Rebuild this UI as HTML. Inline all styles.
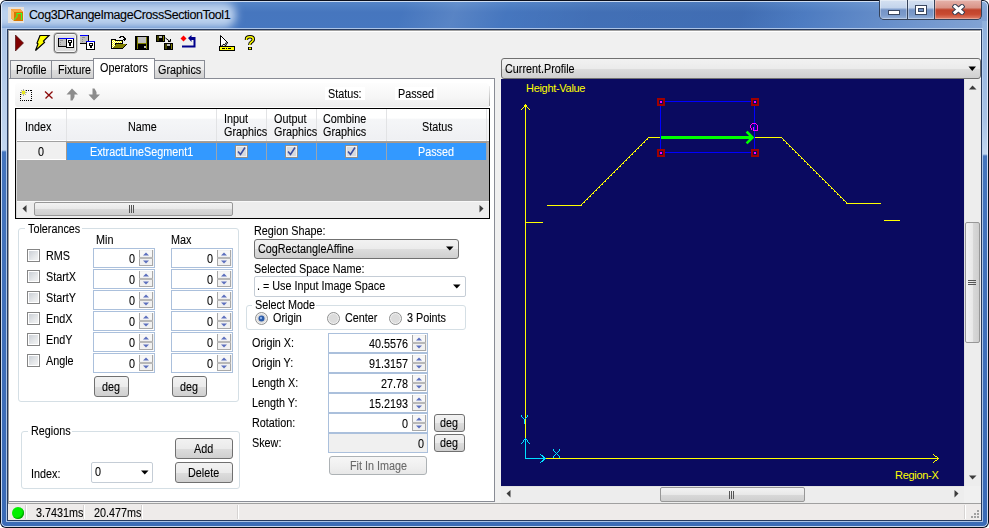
<!DOCTYPE html>
<html><head><meta charset="utf-8">
<style>
*{box-sizing:border-box;margin:0;padding:0}
html,body{width:989px;height:528px;overflow:hidden;background:#fff}
body{position:relative;font-family:"Liberation Sans",sans-serif;font-size:12px;color:#000}
.a{position:absolute}
.t{position:absolute;white-space:nowrap;line-height:14px;font-size:12px;transform:scaleX(.9);transform-origin:0 0;-webkit-text-stroke:0.1px currentColor}
.r{transform-origin:100% 0}
</style></head><body>
<!-- window frame -->
<div class="a" id="win" style="left:0;top:0;width:989px;height:528px;border-radius:6px 6px 6px 6px;overflow:hidden;background:#0a0f1c">
  <div class="a" style="left:1px;top:1px;width:987px;height:526px;border-radius:5px;overflow:hidden;background:#3c6cb6">
  <div class="a" style="left:0;top:0;width:987px;height:28px;background:linear-gradient(180deg,#5586c8 0,#4676be 40%,#4677c0 100%)"></div>
  <div class="a" style="left:0;top:0;width:987px;height:28px;background:linear-gradient(110deg,rgba(255,255,255,0) 0,rgba(255,255,255,0) 380px,rgba(255,255,255,.1) 430px,rgba(255,255,255,0) 480px,rgba(0,0,40,.06) 560px,rgba(0,0,40,.08) 700px,rgba(255,255,255,.04) 760px,rgba(255,255,255,.16) 830px,rgba(255,255,255,.28) 900px,rgba(255,255,255,.4) 989px)"></div>
  <div class="a" style="left:-20px;top:1px;width:255px;height:26px;background:#bcd2ee;border-radius:0 12px 12px 0;filter:blur(4px)"></div>
  <!-- side frames -->
  <div class="a" style="left:0;top:27px;width:6px;height:500px;background:linear-gradient(180deg,#abc4e6 0,#c2d6ef 122px,#4575bd 124px,#3a6ab6 500px)"></div>
  <div class="a" style="left:981px;top:20px;width:6px;height:500px;background:linear-gradient(180deg,#8fb0dc 0,#a9c3e6 100px,#c2d6ef 133px,#4575bd 135px,#3a6ab6 500px)"></div>
  </div>
  <!-- light inner edges -->
  <div class="a" style="left:1px;top:1px;width:987px;height:526px;border:1px solid rgba(235,242,252,.8);border-radius:5px"></div>
  <!-- frame inner light + dark lines around client -->
  <div class="a" style="left:6px;top:28px;width:977px;height:494px;border:1px solid rgba(190,210,238,.85)"></div>
  <div class="a" style="left:7px;top:29px;width:975px;height:492px;border:1px solid #263a5e"></div>
</div>
<!-- title -->
<div class="a" style="left:8px;top:7px;width:16px;height:16px;background:#e6e2dd"></div>
<svg class="a" style="left:8px;top:7px" width="16" height="16" viewBox="0 0 16 16">
 <path d="M3 2 H12 L15 5 V14 H6 L3 11 Z" fill="#d97500"/>
 <path d="M3 2 H12 L15 5 H6 Z" fill="#f9a640"/>
 <path d="M3 2 L6 5 V14 L3 11 Z" fill="#fbb458"/>
 <path d="M6 13 L9 9.5 V6.5 H13.5 V13" fill="none" stroke="#30ff30" stroke-width="1.1"/>
</svg>
<div class="t" style="left:29px;top:8px;font-size:12.5px;letter-spacing:-0.42px;line-height:15px;color:#000;transform:none">Cog3DRangeImageCrossSectionTool1</div>
<!-- window buttons -->
<div class="a" style="left:879px;top:0;width:103px;height:20px;border:1px solid #34425a;border-top:none;border-radius:0 0 5px 5px;overflow:hidden;background:#34425a">
  <div class="a" style="left:0;top:0;width:27px;height:19px;background:linear-gradient(180deg,#d5e1f1 0,#c3d4ec 40%,#7594c6 52%,#7c9bcb 80%,#97b3dc 100%);box-shadow:inset 0 0 0 1px rgba(255,255,255,.35)"></div>
  <div class="a" style="left:28px;top:0;width:26px;height:19px;background:linear-gradient(180deg,#d5e1f1 0,#c3d4ec 40%,#7594c6 52%,#7c9bcb 80%,#97b3dc 100%);box-shadow:inset 0 0 0 1px rgba(255,255,255,.35)"></div>
  <div class="a" style="left:55px;top:0;width:47px;height:19px;background:linear-gradient(180deg,#e6b3ab 0,#d99488 40%,#c0432c 52%,#c84a31 75%,#e0806a 100%);box-shadow:inset 0 0 0 1px rgba(255,255,255,.3)"></div>
</div>
<svg class="a" style="left:888px;top:10px" width="12" height="5"><rect x="0.5" y="0.5" width="11" height="4" fill="#fff" stroke="#3a4760"/></svg>
<svg class="a" style="left:915px;top:5px" width="12" height="10"><rect x="0.5" y="0.5" width="11" height="9" fill="#fff" stroke="#3a4760"/><rect x="3.5" y="3.5" width="5" height="3" fill="#6f8fc3" stroke="#3a4760"/></svg>
<svg class="a" style="left:952px;top:4px" width="13" height="11"><path d="M3 2.5 L10 8.5 M10 2.5 L3 8.5" fill="none" stroke="#3a3f52" stroke-width="5" stroke-linecap="square"/><path d="M3 2.5 L10 8.5 M10 2.5 L3 8.5" fill="none" stroke="#fff" stroke-width="3" stroke-linecap="square"/></svg>
<!-- client -->
<div class="a" id="client" style="left:8px;top:30px;width:973px;height:490px;border-top:1px solid #a0a0a0;border-left:1px solid #a0a0a0;border-bottom:1px solid #fff;border-right:1px solid #fff;background:#f0f0f0"></div>
<div class="a" style="left:9px;top:31px;width:971px;height:1px;background:#fff"></div>

<!-- toolbar -->
<div id="toolbar">
 <!-- run -->
 <svg class="a" style="left:14px;top:34px" width="12" height="18"><path d="M1.5 1 L9.5 9 L1.5 17 Z" fill="#800000" stroke="#3a0000" stroke-width="0.6"/></svg>
 <!-- lightning -->
 <svg class="a" style="left:34px;top:34px" width="17" height="18"><path d="M6 1.5 H15 L9.5 7 L10.5 8.5 L1.5 16.5 L4 10 L3 9 Z" fill="#ffff00" stroke="#000" stroke-width="1.2"/></svg>
 <!-- toggle button -->
 <div class="a" style="left:54px;top:33px;width:23px;height:20px;border:1px solid #6e6e6e;border-radius:3px;background:linear-gradient(180deg,#e4e4e4 0,#dadada 100%);box-shadow:inset 0 0 0 1px #f6f6f6,0 0 0 0.5px #9a9a9a"></div>
 <svg class="a" style="left:58px;top:37px" width="17" height="11" shape-rendering="crispEdges">
  <rect x="0" y="1" width="8" height="9" fill="#000"/>
  <rect x="1" y="1" width="7" height="8" fill="#c0c0c0"/>
  <rect x="1" y="1" width="7" height="1" fill="#0000ff"/>
  <rect x="2" y="3" width="3" height="1" fill="#909090"/><rect x="2" y="5" width="1" height="1" fill="#909090"/><rect x="2" y="7" width="1" height="1" fill="#909090"/>
  <rect x="8" y="1" width="8" height="10" fill="#000"/>
  <rect x="9" y="1" width="6" height="9" fill="#fff"/>
  <rect x="8" y="1" width="8" height="1" fill="#0000ff"/>
  <rect x="10" y="3" width="4" height="3" fill="#000"/><rect x="11" y="4" width="2" height="1" fill="#fff"/><rect x="11" y="6" width="2" height="3" fill="#000"/>
 </svg>
 <svg class="a" style="left:80px;top:35px" width="16" height="16" shape-rendering="crispEdges">
  <rect x="0" y="0" width="9" height="9" fill="#000"/>
  <rect x="0" y="1" width="8" height="7" fill="#c0c0c0"/>
  <rect x="0" y="0" width="8" height="1" fill="#0000ff"/>
  <rect x="2" y="2" width="3" height="1" fill="#909090"/><rect x="2" y="4" width="1" height="1" fill="#909090"/><rect x="2" y="6" width="1" height="1" fill="#909090"/>
  <rect x="6" y="6" width="9" height="9" fill="#000"/>
  <rect x="7" y="7" width="7" height="7" fill="#fff"/>
  <rect x="6" y="6" width="9" height="1" fill="#0000ff"/>
  <rect x="9" y="8" width="4" height="3" fill="#000"/><rect x="10" y="9" width="2" height="1" fill="#fff"/><rect x="10" y="11" width="2" height="2" fill="#000"/>
 </svg>
 <!-- open folder -->
 <svg class="a" style="left:110px;top:35px" width="18" height="15" shape-rendering="crispEdges">
  <defs><pattern id="dth" width="2" height="2" patternUnits="userSpaceOnUse"><rect width="2" height="2" fill="#ffff00"/><rect x="0" y="0" width="1" height="1" fill="#fff"/><rect x="1" y="1" width="1" height="1" fill="#fff"/></pattern></defs>
  <path d="M1 4 H5 L6 5 H13 V9 H17 L13 14 H1 Z" fill="#000"/>
  <rect x="2" y="5" width="3" height="8" fill="url(#dth)"/>
  <rect x="5" y="6" width="7" height="2" fill="url(#dth)"/>
  <path d="M3 13 L6 9 H16 L12.5 13 Z" fill="#808000"/>
  <path d="M9 2 H10 V1 H13 V2 H14 V3 H15 V4" fill="none" stroke="#000" stroke-width="1"/>
  <rect x="13" y="4" width="3" height="1" fill="#000"/><rect x="14" y="5" width="1" height="1" fill="#000"/>
 </svg>
 <!-- save -->
 <svg class="a" style="left:135px;top:36px" width="14" height="14">
  <rect x="0" y="0" width="14" height="14" fill="#000"/>
  <rect x="2" y="1" width="1" height="12" fill="#808000"/><rect x="11" y="1" width="1" height="12" fill="#808000"/>
  <rect x="3" y="1" width="8" height="6" fill="#c0c0c0"/>
  <rect x="2" y="7" width="10" height="1" fill="#808000"/>
  <rect x="9" y="10" width="2" height="2" fill="#c0c0c0"/>
 </svg>
 <!-- save as -->
 <svg class="a" style="left:156px;top:35px" width="17" height="15">
  <rect x="0" y="0" width="9" height="7" fill="#000"/><rect x="1.5" y="1" width="1" height="5" fill="#808000"/><rect x="7" y="1" width="1" height="5" fill="#808000"/><rect x="3" y="1" width="3" height="2" fill="#c0c0c0"/>
  <rect x="8" y="8" width="9" height="7" fill="#000"/><rect x="9.5" y="9" width="1" height="5" fill="#808000"/><rect x="15" y="9" width="1" height="5" fill="#808000"/><rect x="11" y="9" width="3" height="2" fill="#c0c0c0"/>
  <path d="M9.5 3 L14 6.5 M12 6.5 H14.5 V4" fill="none" stroke="#000" stroke-width="1"/>
 </svg>
 <!-- import -->
 <svg class="a" style="left:180px;top:35px" width="17" height="14">
  <path d="M3.5 0.5 L6.5 3.5 L3.5 6.5 L0.5 3.5 Z" fill="#ff0000"/>
  <path d="M8 3 L11.5 0 V2 H15.5 V12.5 H2 V10.5 H13.5 V5 H11.5 V7 Z" fill="#00008b"/>
 </svg>
 <!-- cursor ruler -->
 <svg class="a" style="left:219px;top:35px" width="16" height="16">
  <path d="M1.5 0.5 L9 8 L6.5 8 L7.5 10 L6 10.5 L5 9 L1.5 12 Z" fill="#fff" stroke="#000" stroke-width="1"/>
  <rect x="0" y="11" width="16" height="5" fill="#000"/>
  <rect x="1" y="12" width="14" height="3" fill="#ffff00"/>
  <path d="M3 13.5 H6 M7 13.5 H8 M9 13.5 H12" stroke="#000" stroke-width="1"/>
 </svg>
 <!-- help -->
 <svg class="a" style="left:244px;top:35px" width="12" height="16">
  <path d="M2.5 5 V4 Q2.5 1.8 6 1.8 Q9.3 1.8 9.3 4.3 Q9.3 6.2 7.2 7.2 Q5.8 8 5.8 10" fill="none" stroke="#000" stroke-width="3.4"/>
  <path d="M2.5 5 V4 Q2.5 1.8 6 1.8 Q9.3 1.8 9.3 4.3 Q9.3 6.2 7.2 7.2 Q5.8 8 5.8 10" fill="none" stroke="#ffff00" stroke-width="1.5"/>
  <rect x="4" y="12" width="4" height="3" fill="#000"/><rect x="5" y="12.6" width="2" height="1.6" fill="#ffff00"/>
 </svg>
</div>

<!-- tabs -->
<div id="tabs">
 <div class="a" style="left:10px;top:60px;width:42px;height:19px;border:1px solid #898c95;border-bottom:none;background:linear-gradient(180deg,#f2f2f2 0,#ebebeb 50%,#dddddd 51%,#cfcfcf 100%)"></div>
 <div class="t" style="left:16px;top:63px">Profile</div>
 <div class="a" style="left:51px;top:60px;width:43px;height:19px;border:1px solid #898c95;border-bottom:none;background:linear-gradient(180deg,#f2f2f2 0,#ebebeb 50%,#dddddd 51%,#cfcfcf 100%)"></div>
 <div class="t" style="left:58px;top:63px">Fixture</div>
 <div class="a" style="left:154px;top:60px;width:51px;height:19px;border:1px solid #898c95;border-bottom:none;background:linear-gradient(180deg,#f2f2f2 0,#ebebeb 50%,#dddddd 51%,#cfcfcf 100%)"></div>
 <div class="t" style="left:158px;top:63px">Graphics</div>
</div>

<!-- left panel -->
<div class="a" id="page" style="left:9px;top:78px;width:486px;height:424px;background:#fff;border:1px solid #898c95;border-left:none"></div>
<div class="a" style="left:93px;top:58px;width:62px;height:21px;border:1px solid #898c95;border-bottom:none;background:#fff"></div>
<div class="t" style="left:100px;top:61px">Operators</div>

<!-- inner toolbar -->
<div class="a" style="left:15px;top:83px;width:474px;height:24px;border-radius:3px 3px 0 3px;background:linear-gradient(180deg,#fdfdfd 0,#f6f6f6 60%,#eeeeee 100%)"></div>
<div class="a" style="left:489px;top:86px;width:1px;height:20px;background:linear-gradient(180deg,#f0f0f0 0,#a8a8a8 100%)"></div>
<svg class="a" style="left:19px;top:88px" width="14" height="14">
 <g fill="#000"><rect x="1" y="12" width="1" height="1"/><rect x="3" y="12" width="1" height="1"/><rect x="5" y="12" width="1" height="1"/><rect x="7" y="12" width="1" height="1"/><rect x="9" y="12" width="1" height="1"/><rect x="11" y="12" width="1" height="1"/><rect x="12" y="2" width="1" height="1"/><rect x="12" y="4" width="1" height="1"/><rect x="12" y="6" width="1" height="1"/><rect x="12" y="8" width="1" height="1"/><rect x="12" y="10" width="1" height="1"/><rect x="12" y="12" width="1" height="1"/><rect x="1" y="4" width="1" height="1"/><rect x="1" y="6" width="1" height="1"/><rect x="1" y="8" width="1" height="1"/><rect x="1" y="10" width="1" height="1"/><rect x="1" y="12" width="1" height="1"/><rect x="7" y="2" width="1" height="1"/><rect x="9" y="2" width="1" height="1"/><rect x="11" y="2" width="1" height="1"/></g>
 <path d="M2 2 L7 7 M7 2 L2 7 M4.5 1 V8 M1 4.5 H8" stroke="#9a9a9a" stroke-width="0.8"/>
 <path d="M3 3 L6 6 M6 3 L3 6" stroke="#f0f000" stroke-width="1.3"/>
</svg>
<svg class="a" style="left:44px;top:90px" width="10" height="10"><path d="M1 1.5 L8.5 8.5 M8.5 1.5 L1.5 8.5" stroke="#8b0a0a" stroke-width="1.3"/></svg>
<svg class="a" style="left:66px;top:88px" width="13" height="13"><path d="M6 0.5 L12 6.5 H8.5 V9 L6.5 12.5 H4.5 V6.5 H0.5 Z" fill="#8c8c8c"/></svg>
<svg class="a" style="left:88px;top:88px" width="13" height="13"><path d="M6 12.5 L12 6.5 H8.5 V4 L6.5 0.5 H4.5 V6.5 H0.5 Z" fill="#8c8c8c"/></svg>
<div class="a" style="left:325px;top:87px;width:40px;height:13px;background:#fff"></div>
<div class="t" style="left:328px;top:87px">Status:</div>
<div class="a" style="left:395px;top:87px;width:42px;height:13px;background:#fff"></div>
<div class="t" style="left:398px;top:87px">Passed</div>

<!-- grid -->
<div class="a" style="left:15px;top:108px;width:475px;height:111px;border:1px solid #000;background:#ababab"></div>
<div class="a" style="left:16px;top:109px;width:1px;height:109px;background:#d8d8d8"></div>
<div class="a" style="left:17px;top:109px;width:472px;height:32px;background:linear-gradient(180deg,#ffffff 0,#ffffff 30%,#f5f6f8 32%,#eff0f3 100%);border-bottom:1px solid #fff"></div>
<div class="a" style="left:17px;top:141px;width:472px;height:1px;background:#a0a0a0"></div>
<div class="a" style="left:66px;top:109px;width:1px;height:32px;background:#e2e3e5"></div>
<div class="a" style="left:216px;top:109px;width:1px;height:32px;background:#e2e3e5"></div>
<div class="a" style="left:266px;top:109px;width:1px;height:32px;background:#e2e3e5"></div>
<div class="a" style="left:316px;top:109px;width:1px;height:32px;background:#e2e3e5"></div>
<div class="a" style="left:386px;top:109px;width:1px;height:32px;background:#e2e3e5"></div>
<div class="a" style="left:486px;top:109px;width:1px;height:32px;background:#e2e3e5"></div>
<div class="t" style="left:25px;top:120px">Index</div>
<div class="t" style="left:128px;top:120px">Name</div>
<div class="t" style="left:224px;top:113px;line-height:13px">Input<br>Graphics</div>
<div class="t" style="left:274px;top:113px;line-height:13px">Output<br>Graphics</div>
<div class="t" style="left:323px;top:113px;line-height:13px">Combine<br>Graphics</div>
<div class="t" style="left:422px;top:120px">Status</div>
<!-- row -->
<div class="a" style="left:17px;top:142px;width:49px;height:18px;background:#f0f0f0;border-bottom:1px solid #fff"></div>
<div class="t" style="left:38px;top:145px">0</div>
<div class="a" style="left:66px;top:142px;width:421px;height:18px;background:#3399ff;border-left:1px solid #a89888;border-top:1px solid #a89888"></div>
<div class="a" style="left:216px;top:143px;width:1px;height:17px;background:#9aa5b0"></div>
<div class="a" style="left:266px;top:143px;width:1px;height:17px;background:#9aa5b0"></div>
<div class="a" style="left:316px;top:143px;width:1px;height:17px;background:#9aa5b0"></div>
<div class="a" style="left:386px;top:143px;width:1px;height:17px;background:#9aa5b0"></div>
<div class="a" style="left:486px;top:143px;width:1px;height:17px;background:#9aa5b0"></div>
<div class="t" style="left:90px;top:145px;color:#fff">ExtractLineSegment1</div>
<div class="t" style="left:418px;top:145px;color:#fff">Passed</div>
<svg class="a" style="left:235px;top:145px" width="13" height="13"><rect x="0.5" y="0.5" width="12" height="12" fill="#f0f0f0" stroke="#8e8f8f"/><rect x="2" y="2" width="9" height="9" fill="#d8dbe0"/><path d="M3 6.5 L5.5 9.5 L10 2.5" fill="none" stroke="#3a4fa0" stroke-width="1.6"/></svg>
<svg class="a" style="left:285px;top:145px" width="13" height="13"><rect x="0.5" y="0.5" width="12" height="12" fill="#f0f0f0" stroke="#8e8f8f"/><rect x="2" y="2" width="9" height="9" fill="#d8dbe0"/><path d="M3 6.5 L5.5 9.5 L10 2.5" fill="none" stroke="#3a4fa0" stroke-width="1.6"/></svg>
<svg class="a" style="left:345px;top:145px" width="13" height="13"><rect x="0.5" y="0.5" width="12" height="12" fill="#f0f0f0" stroke="#8e8f8f"/><rect x="2" y="2" width="9" height="9" fill="#d8dbe0"/><path d="M3 6.5 L5.5 9.5 L10 2.5" fill="none" stroke="#3a4fa0" stroke-width="1.6"/></svg>
<!-- grid h scrollbar -->
<div class="a" style="left:17px;top:201px;width:472px;height:1px;background:#f8f8f8"></div><div class="a" style="left:17px;top:202px;width:472px;height:16px;background:#ededed"></div>
<svg class="a" style="left:22px;top:205px" width="5" height="8"><path d="M4.5 0 L0.5 3.5 L4.5 7.5 Z" fill="#3c3c3c"/></svg>
<svg class="a" style="left:479px;top:205px" width="5" height="8"><path d="M0.5 0 L4.5 3.5 L0.5 7.5 Z" fill="#3c3c3c"/></svg>
<div class="a" style="left:34px;top:202px;width:199px;height:14px;border:1px solid #979797;border-radius:2px;background:linear-gradient(180deg,#f3f3f3 0,#e8e8e8 50%,#d9d9d9 51%,#cecece 100%)"></div>
<div class="a" style="left:129px;top:205px;width:5px;height:8px;border-left:1px solid #555;border-right:1px solid #555"></div>
<div class="a" style="left:131px;top:205px;width:1px;height:8px;background:#555"></div>

<!-- tolerances group -->
<div class="a" style="left:18px;top:228px;width:221px;height:174px;border:1px solid #d5dfe5;border-radius:3px"></div>
<div class="a" style="left:25px;top:224px;width:57px;height:10px;background:#fff"></div>
<div class="t" style="left:28px;top:222px">Tolerances</div>
<div class="t" style="left:96px;top:233px">Min</div>
<div class="t" style="left:171px;top:233px">Max</div>
<div id="tolrows">
<div class="a" style="left:27px;top:249px;width:13px;height:13px;border:1px solid #858585;background:linear-gradient(135deg,#c6cbd2 0,#e6e8ea 60%,#f6f6f6 100%);box-shadow:inset 0 0 0 1px #fff"></div>
<div class="t" style="left:46px;top:249px">RMS</div>
<div class="a" style="left:93px;top:248px;width:62px;height:20px;border:1px solid #abc0dc;background:#fff"></div>
<svg class="a" style="left:139px;top:250px" width="15" height="16">
 <rect x="0" y="0" width="15" height="16" fill="#f1f1f1"/>
 <rect x="1" y="1" width="13" height="5" fill="#f7f7f7"/>
 <rect x="0" y="0" width="1" height="16" fill="#a8a8a8"/><rect x="13" y="0" width="1" height="16" fill="#a8a8a8"/>
 <rect x="0" y="7" width="14" height="2" fill="#b8b8b8"/><rect x="0" y="15" width="14" height="1" fill="#a8a8a8"/>
 <path d="M4 5.5 L7 2.5 L10 5.5 Z" fill="#5c6fbd"/>
 <path d="M4 10.5 L7 13.5 L10 10.5 Z" fill="#5c6fbd"/>
</svg>
<div class="t r" style="left:-65px;width:200px;top:252px;text-align:right">0</div>
<div class="a" style="left:171px;top:248px;width:62px;height:20px;border:1px solid #abc0dc;background:#fff"></div>
<svg class="a" style="left:217px;top:250px" width="15" height="16">
 <rect x="0" y="0" width="15" height="16" fill="#f1f1f1"/>
 <rect x="1" y="1" width="13" height="5" fill="#f7f7f7"/>
 <rect x="0" y="0" width="1" height="16" fill="#a8a8a8"/><rect x="13" y="0" width="1" height="16" fill="#a8a8a8"/>
 <rect x="0" y="7" width="14" height="2" fill="#b8b8b8"/><rect x="0" y="15" width="14" height="1" fill="#a8a8a8"/>
 <path d="M4 5.5 L7 2.5 L10 5.5 Z" fill="#5c6fbd"/>
 <path d="M4 10.5 L7 13.5 L10 10.5 Z" fill="#5c6fbd"/>
</svg>
<div class="t r" style="left:13px;width:200px;top:252px;text-align:right">0</div>
<div class="a" style="left:27px;top:270px;width:13px;height:13px;border:1px solid #858585;background:linear-gradient(135deg,#c6cbd2 0,#e6e8ea 60%,#f6f6f6 100%);box-shadow:inset 0 0 0 1px #fff"></div>
<div class="t" style="left:46px;top:270px">StartX</div>
<div class="a" style="left:93px;top:269px;width:62px;height:20px;border:1px solid #abc0dc;background:#fff"></div>
<svg class="a" style="left:139px;top:271px" width="15" height="16">
 <rect x="0" y="0" width="15" height="16" fill="#f1f1f1"/>
 <rect x="1" y="1" width="13" height="5" fill="#f7f7f7"/>
 <rect x="0" y="0" width="1" height="16" fill="#a8a8a8"/><rect x="13" y="0" width="1" height="16" fill="#a8a8a8"/>
 <rect x="0" y="7" width="14" height="2" fill="#b8b8b8"/><rect x="0" y="15" width="14" height="1" fill="#a8a8a8"/>
 <path d="M4 5.5 L7 2.5 L10 5.5 Z" fill="#5c6fbd"/>
 <path d="M4 10.5 L7 13.5 L10 10.5 Z" fill="#5c6fbd"/>
</svg>
<div class="t r" style="left:-65px;width:200px;top:273px;text-align:right">0</div>
<div class="a" style="left:171px;top:269px;width:62px;height:20px;border:1px solid #abc0dc;background:#fff"></div>
<svg class="a" style="left:217px;top:271px" width="15" height="16">
 <rect x="0" y="0" width="15" height="16" fill="#f1f1f1"/>
 <rect x="1" y="1" width="13" height="5" fill="#f7f7f7"/>
 <rect x="0" y="0" width="1" height="16" fill="#a8a8a8"/><rect x="13" y="0" width="1" height="16" fill="#a8a8a8"/>
 <rect x="0" y="7" width="14" height="2" fill="#b8b8b8"/><rect x="0" y="15" width="14" height="1" fill="#a8a8a8"/>
 <path d="M4 5.5 L7 2.5 L10 5.5 Z" fill="#5c6fbd"/>
 <path d="M4 10.5 L7 13.5 L10 10.5 Z" fill="#5c6fbd"/>
</svg>
<div class="t r" style="left:13px;width:200px;top:273px;text-align:right">0</div>
<div class="a" style="left:27px;top:291px;width:13px;height:13px;border:1px solid #858585;background:linear-gradient(135deg,#c6cbd2 0,#e6e8ea 60%,#f6f6f6 100%);box-shadow:inset 0 0 0 1px #fff"></div>
<div class="t" style="left:46px;top:291px">StartY</div>
<div class="a" style="left:93px;top:290px;width:62px;height:20px;border:1px solid #abc0dc;background:#fff"></div>
<svg class="a" style="left:139px;top:292px" width="15" height="16">
 <rect x="0" y="0" width="15" height="16" fill="#f1f1f1"/>
 <rect x="1" y="1" width="13" height="5" fill="#f7f7f7"/>
 <rect x="0" y="0" width="1" height="16" fill="#a8a8a8"/><rect x="13" y="0" width="1" height="16" fill="#a8a8a8"/>
 <rect x="0" y="7" width="14" height="2" fill="#b8b8b8"/><rect x="0" y="15" width="14" height="1" fill="#a8a8a8"/>
 <path d="M4 5.5 L7 2.5 L10 5.5 Z" fill="#5c6fbd"/>
 <path d="M4 10.5 L7 13.5 L10 10.5 Z" fill="#5c6fbd"/>
</svg>
<div class="t r" style="left:-65px;width:200px;top:294px;text-align:right">0</div>
<div class="a" style="left:171px;top:290px;width:62px;height:20px;border:1px solid #abc0dc;background:#fff"></div>
<svg class="a" style="left:217px;top:292px" width="15" height="16">
 <rect x="0" y="0" width="15" height="16" fill="#f1f1f1"/>
 <rect x="1" y="1" width="13" height="5" fill="#f7f7f7"/>
 <rect x="0" y="0" width="1" height="16" fill="#a8a8a8"/><rect x="13" y="0" width="1" height="16" fill="#a8a8a8"/>
 <rect x="0" y="7" width="14" height="2" fill="#b8b8b8"/><rect x="0" y="15" width="14" height="1" fill="#a8a8a8"/>
 <path d="M4 5.5 L7 2.5 L10 5.5 Z" fill="#5c6fbd"/>
 <path d="M4 10.5 L7 13.5 L10 10.5 Z" fill="#5c6fbd"/>
</svg>
<div class="t r" style="left:13px;width:200px;top:294px;text-align:right">0</div>
<div class="a" style="left:27px;top:312px;width:13px;height:13px;border:1px solid #858585;background:linear-gradient(135deg,#c6cbd2 0,#e6e8ea 60%,#f6f6f6 100%);box-shadow:inset 0 0 0 1px #fff"></div>
<div class="t" style="left:46px;top:312px">EndX</div>
<div class="a" style="left:93px;top:311px;width:62px;height:20px;border:1px solid #abc0dc;background:#fff"></div>
<svg class="a" style="left:139px;top:313px" width="15" height="16">
 <rect x="0" y="0" width="15" height="16" fill="#f1f1f1"/>
 <rect x="1" y="1" width="13" height="5" fill="#f7f7f7"/>
 <rect x="0" y="0" width="1" height="16" fill="#a8a8a8"/><rect x="13" y="0" width="1" height="16" fill="#a8a8a8"/>
 <rect x="0" y="7" width="14" height="2" fill="#b8b8b8"/><rect x="0" y="15" width="14" height="1" fill="#a8a8a8"/>
 <path d="M4 5.5 L7 2.5 L10 5.5 Z" fill="#5c6fbd"/>
 <path d="M4 10.5 L7 13.5 L10 10.5 Z" fill="#5c6fbd"/>
</svg>
<div class="t r" style="left:-65px;width:200px;top:315px;text-align:right">0</div>
<div class="a" style="left:171px;top:311px;width:62px;height:20px;border:1px solid #abc0dc;background:#fff"></div>
<svg class="a" style="left:217px;top:313px" width="15" height="16">
 <rect x="0" y="0" width="15" height="16" fill="#f1f1f1"/>
 <rect x="1" y="1" width="13" height="5" fill="#f7f7f7"/>
 <rect x="0" y="0" width="1" height="16" fill="#a8a8a8"/><rect x="13" y="0" width="1" height="16" fill="#a8a8a8"/>
 <rect x="0" y="7" width="14" height="2" fill="#b8b8b8"/><rect x="0" y="15" width="14" height="1" fill="#a8a8a8"/>
 <path d="M4 5.5 L7 2.5 L10 5.5 Z" fill="#5c6fbd"/>
 <path d="M4 10.5 L7 13.5 L10 10.5 Z" fill="#5c6fbd"/>
</svg>
<div class="t r" style="left:13px;width:200px;top:315px;text-align:right">0</div>
<div class="a" style="left:27px;top:333px;width:13px;height:13px;border:1px solid #858585;background:linear-gradient(135deg,#c6cbd2 0,#e6e8ea 60%,#f6f6f6 100%);box-shadow:inset 0 0 0 1px #fff"></div>
<div class="t" style="left:46px;top:333px">EndY</div>
<div class="a" style="left:93px;top:332px;width:62px;height:20px;border:1px solid #abc0dc;background:#fff"></div>
<svg class="a" style="left:139px;top:334px" width="15" height="16">
 <rect x="0" y="0" width="15" height="16" fill="#f1f1f1"/>
 <rect x="1" y="1" width="13" height="5" fill="#f7f7f7"/>
 <rect x="0" y="0" width="1" height="16" fill="#a8a8a8"/><rect x="13" y="0" width="1" height="16" fill="#a8a8a8"/>
 <rect x="0" y="7" width="14" height="2" fill="#b8b8b8"/><rect x="0" y="15" width="14" height="1" fill="#a8a8a8"/>
 <path d="M4 5.5 L7 2.5 L10 5.5 Z" fill="#5c6fbd"/>
 <path d="M4 10.5 L7 13.5 L10 10.5 Z" fill="#5c6fbd"/>
</svg>
<div class="t r" style="left:-65px;width:200px;top:336px;text-align:right">0</div>
<div class="a" style="left:171px;top:332px;width:62px;height:20px;border:1px solid #abc0dc;background:#fff"></div>
<svg class="a" style="left:217px;top:334px" width="15" height="16">
 <rect x="0" y="0" width="15" height="16" fill="#f1f1f1"/>
 <rect x="1" y="1" width="13" height="5" fill="#f7f7f7"/>
 <rect x="0" y="0" width="1" height="16" fill="#a8a8a8"/><rect x="13" y="0" width="1" height="16" fill="#a8a8a8"/>
 <rect x="0" y="7" width="14" height="2" fill="#b8b8b8"/><rect x="0" y="15" width="14" height="1" fill="#a8a8a8"/>
 <path d="M4 5.5 L7 2.5 L10 5.5 Z" fill="#5c6fbd"/>
 <path d="M4 10.5 L7 13.5 L10 10.5 Z" fill="#5c6fbd"/>
</svg>
<div class="t r" style="left:13px;width:200px;top:336px;text-align:right">0</div>
<div class="a" style="left:27px;top:354px;width:13px;height:13px;border:1px solid #858585;background:linear-gradient(135deg,#c6cbd2 0,#e6e8ea 60%,#f6f6f6 100%);box-shadow:inset 0 0 0 1px #fff"></div>
<div class="t" style="left:46px;top:354px">Angle</div>
<div class="a" style="left:93px;top:353px;width:62px;height:20px;border:1px solid #abc0dc;background:#fff"></div>
<svg class="a" style="left:139px;top:355px" width="15" height="16">
 <rect x="0" y="0" width="15" height="16" fill="#f1f1f1"/>
 <rect x="1" y="1" width="13" height="5" fill="#f7f7f7"/>
 <rect x="0" y="0" width="1" height="16" fill="#a8a8a8"/><rect x="13" y="0" width="1" height="16" fill="#a8a8a8"/>
 <rect x="0" y="7" width="14" height="2" fill="#b8b8b8"/><rect x="0" y="15" width="14" height="1" fill="#a8a8a8"/>
 <path d="M4 5.5 L7 2.5 L10 5.5 Z" fill="#5c6fbd"/>
 <path d="M4 10.5 L7 13.5 L10 10.5 Z" fill="#5c6fbd"/>
</svg>
<div class="t r" style="left:-65px;width:200px;top:357px;text-align:right">0</div>
<div class="a" style="left:171px;top:353px;width:62px;height:20px;border:1px solid #abc0dc;background:#fff"></div>
<svg class="a" style="left:217px;top:355px" width="15" height="16">
 <rect x="0" y="0" width="15" height="16" fill="#f1f1f1"/>
 <rect x="1" y="1" width="13" height="5" fill="#f7f7f7"/>
 <rect x="0" y="0" width="1" height="16" fill="#a8a8a8"/><rect x="13" y="0" width="1" height="16" fill="#a8a8a8"/>
 <rect x="0" y="7" width="14" height="2" fill="#b8b8b8"/><rect x="0" y="15" width="14" height="1" fill="#a8a8a8"/>
 <path d="M4 5.5 L7 2.5 L10 5.5 Z" fill="#5c6fbd"/>
 <path d="M4 10.5 L7 13.5 L10 10.5 Z" fill="#5c6fbd"/>
</svg>
<div class="t r" style="left:13px;width:200px;top:357px;text-align:right">0</div>
</div><!--/tolrows-->
<div class="a" style="left:94px;top:376px;width:35px;height:21px;border:1px solid #707070;border-radius:3px;background:linear-gradient(180deg,#f2f2f2 0,#ebebeb 50%,#dddddd 51%,#cfcfcf 100%)"></div>
<div class="t" style="left:101.5px;top:380px">deg</div>
<div class="a" style="left:172px;top:376px;width:35px;height:21px;border:1px solid #707070;border-radius:3px;background:linear-gradient(180deg,#f2f2f2 0,#ebebeb 50%,#dddddd 51%,#cfcfcf 100%)"></div>
<div class="t" style="left:179.5px;top:380px">deg</div>

<!-- regions group -->
<div class="a" style="left:21px;top:431px;width:219px;height:58px;border:1px solid #d5dfe5;border-radius:3px"></div>
<div class="a" style="left:28px;top:427px;width:44px;height:10px;background:#fff"></div>
<div class="t" style="left:31px;top:424px">Regions</div>
<div class="t" style="left:31px;top:467px">Index:</div>
<div class="a" style="left:91px;top:462px;width:62px;height:21px;border:1px solid #c5cdd6;border-radius:2px;background:#fff"></div>
<div class="t" style="left:95px;top:465px">0</div>
<svg class="a" style="left:141px;top:470px" width="8" height="5"><path d="M0 0.5 H7.5 L3.75 4.5 Z" fill="#000"/></svg>
<div class="a" style="left:175px;top:438px;width:58px;height:21px;border:1px solid #707070;border-radius:3px;background:linear-gradient(180deg,#f2f2f2 0,#ebebeb 50%,#dddddd 51%,#cfcfcf 100%)"></div>
<div class="t" style="left:194px;top:442px">Add</div>
<div class="a" style="left:175px;top:462px;width:58px;height:21px;border:1px solid #707070;border-radius:3px;background:linear-gradient(180deg,#f2f2f2 0,#ebebeb 50%,#dddddd 51%,#cfcfcf 100%)"></div>
<div class="t" style="left:188px;top:466px">Delete</div>

<!-- middle form -->
<div class="t" style="left:254px;top:224px">Region Shape:</div>
<div class="a" style="left:254px;top:239px;width:205px;height:20px;border:1px solid #707070;border-radius:3px;background:linear-gradient(180deg,#f2f2f2 0,#ebebeb 50%,#dddddd 51%,#cfcfcf 100%)"></div>
<div class="t" style="left:258px;top:242px">CogRectangleAffine</div>
<svg class="a" style="left:446px;top:246px" width="8" height="5"><path d="M0 0.5 H7.5 L3.75 4.5 Z" fill="#000"/></svg>
<div class="t" style="left:254px;top:262px">Selected Space Name:</div>
<div class="a" style="left:254px;top:276px;width:212px;height:21px;border:1px solid #c5cdd6;border-radius:2px;background:#fff"></div>
<div class="t" style="left:257px;top:279px">. = Use Input Image Space</div>
<svg class="a" style="left:453px;top:284px" width="8" height="5"><path d="M0 0.5 H7.5 L3.75 4.5 Z" fill="#000"/></svg>
<div class="a" style="left:246px;top:305px;width:220px;height:25px;border:1px solid #d5dfe5;border-radius:3px"></div>
<div class="a" style="left:252px;top:300px;width:64px;height:10px;background:#fff"></div>
<div class="t" style="left:255px;top:298px">Select Mode</div>
<div id="radios">
<svg class="a" style="left:255px;top:312px" width="13" height="13"><circle cx="6.5" cy="6.5" r="6" fill="#f0f0f0" stroke="#8e8f8f"/><circle cx="6.5" cy="6.5" r="4.5" fill="#dcdcdc"/><circle cx="6.5" cy="6.5" r="3" fill="#2a5aa8"/><circle cx="6" cy="6" r="1.2" fill="#8ab0e8"/></svg>
<div class="t" style="left:273px;top:311px">Origin</div>
<svg class="a" style="left:327px;top:312px" width="13" height="13"><circle cx="6.5" cy="6.5" r="6" fill="#f0f0f0" stroke="#8e8f8f"/><circle cx="6.5" cy="6.5" r="4.5" fill="#dcdcdc"/></svg>
<div class="t" style="left:345px;top:311px">Center</div>
<svg class="a" style="left:389px;top:312px" width="13" height="13"><circle cx="6.5" cy="6.5" r="6" fill="#f0f0f0" stroke="#8e8f8f"/><circle cx="6.5" cy="6.5" r="4.5" fill="#dcdcdc"/></svg>
<div class="t" style="left:407px;top:311px">3 Points</div>
</div><!--/radios-->
<div id="nums">
<div class="t" style="left:252px;top:336px">Origin X:</div>
<div class="a" style="left:328px;top:333px;width:100px;height:20px;border:1px solid #abc0dc;background:#fff"></div>
<svg class="a" style="left:412px;top:335px" width="15" height="16">
 <rect x="0" y="0" width="15" height="16" fill="#f1f1f1"/>
 <rect x="1" y="1" width="13" height="5" fill="#f7f7f7"/>
 <rect x="0" y="0" width="1" height="16" fill="#a8a8a8"/><rect x="13" y="0" width="1" height="16" fill="#a8a8a8"/>
 <rect x="0" y="7" width="14" height="2" fill="#b8b8b8"/><rect x="0" y="15" width="14" height="1" fill="#a8a8a8"/>
 <path d="M4 5.5 L7 2.5 L10 5.5 Z" fill="#5c6fbd"/>
 <path d="M4 10.5 L7 13.5 L10 10.5 Z" fill="#5c6fbd"/>
</svg>
<div class="t r" style="left:208px;width:200px;top:337px;text-align:right">40.5576</div>
<div class="t" style="left:252px;top:356px">Origin Y:</div>
<div class="a" style="left:328px;top:353px;width:100px;height:20px;border:1px solid #abc0dc;background:#fff"></div>
<svg class="a" style="left:412px;top:355px" width="15" height="16">
 <rect x="0" y="0" width="15" height="16" fill="#f1f1f1"/>
 <rect x="1" y="1" width="13" height="5" fill="#f7f7f7"/>
 <rect x="0" y="0" width="1" height="16" fill="#a8a8a8"/><rect x="13" y="0" width="1" height="16" fill="#a8a8a8"/>
 <rect x="0" y="7" width="14" height="2" fill="#b8b8b8"/><rect x="0" y="15" width="14" height="1" fill="#a8a8a8"/>
 <path d="M4 5.5 L7 2.5 L10 5.5 Z" fill="#5c6fbd"/>
 <path d="M4 10.5 L7 13.5 L10 10.5 Z" fill="#5c6fbd"/>
</svg>
<div class="t r" style="left:208px;width:200px;top:357px;text-align:right">91.3157</div>
<div class="t" style="left:252px;top:376px">Length X:</div>
<div class="a" style="left:328px;top:373px;width:100px;height:20px;border:1px solid #abc0dc;background:#fff"></div>
<svg class="a" style="left:412px;top:375px" width="15" height="16">
 <rect x="0" y="0" width="15" height="16" fill="#f1f1f1"/>
 <rect x="1" y="1" width="13" height="5" fill="#f7f7f7"/>
 <rect x="0" y="0" width="1" height="16" fill="#a8a8a8"/><rect x="13" y="0" width="1" height="16" fill="#a8a8a8"/>
 <rect x="0" y="7" width="14" height="2" fill="#b8b8b8"/><rect x="0" y="15" width="14" height="1" fill="#a8a8a8"/>
 <path d="M4 5.5 L7 2.5 L10 5.5 Z" fill="#5c6fbd"/>
 <path d="M4 10.5 L7 13.5 L10 10.5 Z" fill="#5c6fbd"/>
</svg>
<div class="t r" style="left:208px;width:200px;top:377px;text-align:right">27.78</div>
<div class="t" style="left:252px;top:396px">Length Y:</div>
<div class="a" style="left:328px;top:393px;width:100px;height:20px;border:1px solid #abc0dc;background:#fff"></div>
<svg class="a" style="left:412px;top:395px" width="15" height="16">
 <rect x="0" y="0" width="15" height="16" fill="#f1f1f1"/>
 <rect x="1" y="1" width="13" height="5" fill="#f7f7f7"/>
 <rect x="0" y="0" width="1" height="16" fill="#a8a8a8"/><rect x="13" y="0" width="1" height="16" fill="#a8a8a8"/>
 <rect x="0" y="7" width="14" height="2" fill="#b8b8b8"/><rect x="0" y="15" width="14" height="1" fill="#a8a8a8"/>
 <path d="M4 5.5 L7 2.5 L10 5.5 Z" fill="#5c6fbd"/>
 <path d="M4 10.5 L7 13.5 L10 10.5 Z" fill="#5c6fbd"/>
</svg>
<div class="t r" style="left:208px;width:200px;top:397px;text-align:right">15.2193</div>
<div class="t" style="left:252px;top:416px">Rotation:</div>
<div class="a" style="left:328px;top:413px;width:100px;height:20px;border:1px solid #abc0dc;background:#fff"></div>
<svg class="a" style="left:412px;top:415px" width="15" height="16">
 <rect x="0" y="0" width="15" height="16" fill="#f1f1f1"/>
 <rect x="1" y="1" width="13" height="5" fill="#f7f7f7"/>
 <rect x="0" y="0" width="1" height="16" fill="#a8a8a8"/><rect x="13" y="0" width="1" height="16" fill="#a8a8a8"/>
 <rect x="0" y="7" width="14" height="2" fill="#b8b8b8"/><rect x="0" y="15" width="14" height="1" fill="#a8a8a8"/>
 <path d="M4 5.5 L7 2.5 L10 5.5 Z" fill="#5c6fbd"/>
 <path d="M4 10.5 L7 13.5 L10 10.5 Z" fill="#5c6fbd"/>
</svg>
<div class="t r" style="left:208px;width:200px;top:417px;text-align:right">0</div>
<div class="t" style="left:252px;top:436px">Skew:</div>
<div class="a" style="left:328px;top:433px;width:100px;height:20px;border:1px solid #abc0dc;background:#f0f0f0"></div>
<div class="t r" style="left:224px;width:200px;top:437px;text-align:right">0</div>
<div class="a" style="left:434px;top:414px;width:31px;height:18px;border:1px solid #707070;border-radius:3px;background:linear-gradient(180deg,#f2f2f2 0,#ebebeb 50%,#dddddd 51%,#cfcfcf 100%)"></div>
<div class="t" style="left:440px;top:416px">deg</div>
<div class="a" style="left:434px;top:434px;width:31px;height:18px;border:1px solid #707070;border-radius:3px;background:linear-gradient(180deg,#f2f2f2 0,#ebebeb 50%,#dddddd 51%,#cfcfcf 100%)"></div>
<div class="t" style="left:440px;top:436px">deg</div>
<div class="a" style="left:329px;top:456px;width:98px;height:19px;border:1px solid #adb2b5;border-radius:3px;background:linear-gradient(180deg,#f6f6f6 0,#f0f0f0 50%,#e8e8e8 100%)"></div>
<div class="t" style="left:350px;top:459px;color:#6a6a6a">Fit In Image</div>
</div><!--/nums-->

<!-- right panel -->
<div id="right">
 <div class="a" style="left:501px;top:58px;width:480px;height:21px;border:1px solid #707070;border-radius:3px;background:linear-gradient(180deg,#f2f2f2 0,#ebebeb 50%,#dddddd 51%,#cfcfcf 100%)"></div>
 <div class="t" style="left:505px;top:62px">Current.Profile</div>
 <svg class="a" style="left:968px;top:66px" width="9" height="6"><path d="M0.5 0.5 H8 L4.25 5 Z" fill="#000"/></svg>
 <!-- canvas -->
 <svg class="a" style="left:501px;top:79px" width="463" height="407" viewBox="501 79 463 407" shape-rendering="crispEdges">
  <rect x="501" y="79" width="463" height="407" fill="#0a0a60"/>
  <g fill="none" stroke="#ffff00" stroke-width="1">
   <path d="M525.5 104 V458.5 H939"/>
   
   
   <path d="M525 222.5 H543"/>
   <path d="M547 205.5 H580"/>
   
   <path d="M648 137.5 H661"/>
   <path d="M754 137.5 H781"/>
   
   <path d="M847 203.5 H881"/>
   <path d="M884.5 221 V220.5 H900"/>
  </g>
  <g fill="#ffff00"><rect x="524" y="105" width="1" height="1"/><rect x="526" y="105" width="1" height="1"/><rect x="524" y="106" width="1" height="1"/><rect x="526" y="106" width="1" height="1"/><rect x="523" y="107" width="1" height="1"/><rect x="527" y="107" width="1" height="1"/><rect x="522" y="108" width="1" height="1"/><rect x="528" y="108" width="1" height="1"/><rect x="521" y="109" width="1" height="1"/><rect x="529" y="109" width="1" height="1"/><rect x="933" y="454" width="1" height="1"/><rect x="934" y="455" width="1" height="1"/><rect x="935" y="456" width="1" height="1"/><rect x="936" y="456" width="1" height="1"/><rect x="937" y="457" width="1" height="1"/><rect x="933" y="462" width="1" height="1"/><rect x="934" y="461" width="1" height="1"/><rect x="935" y="460" width="1" height="1"/><rect x="936" y="460" width="1" height="1"/><rect x="937" y="459" width="1" height="1"/></g>
  <g fill="#ffff00"><rect x="580" y="205" width="2" height="1"/><rect x="581" y="204" width="1" height="1"/><rect x="582" y="203" width="1" height="1"/><rect x="583" y="202" width="2" height="1"/><rect x="584" y="201" width="1" height="1"/><rect x="585" y="200" width="1" height="1"/><rect x="586" y="199" width="2" height="1"/><rect x="587" y="198" width="1" height="1"/><rect x="588" y="197" width="1" height="1"/><rect x="589" y="196" width="2" height="1"/><rect x="590" y="195" width="1" height="1"/><rect x="591" y="194" width="1" height="1"/><rect x="592" y="193" width="2" height="1"/><rect x="593" y="192" width="1" height="1"/><rect x="594" y="191" width="1" height="1"/><rect x="595" y="190" width="2" height="1"/><rect x="596" y="189" width="1" height="1"/><rect x="597" y="188" width="1" height="1"/><rect x="598" y="187" width="2" height="1"/><rect x="599" y="186" width="1" height="1"/><rect x="600" y="185" width="1" height="1"/><rect x="601" y="184" width="2" height="1"/><rect x="602" y="183" width="1" height="1"/><rect x="603" y="182" width="1" height="1"/><rect x="604" y="181" width="2" height="1"/><rect x="605" y="180" width="1" height="1"/><rect x="606" y="179" width="1" height="1"/><rect x="607" y="178" width="2" height="1"/><rect x="608" y="177" width="1" height="1"/><rect x="609" y="176" width="1" height="1"/><rect x="610" y="175" width="2" height="1"/><rect x="611" y="174" width="1" height="1"/><rect x="612" y="173" width="1" height="1"/><rect x="613" y="172" width="2" height="1"/><rect x="614" y="171" width="1" height="1"/><rect x="615" y="170" width="1" height="1"/><rect x="616" y="169" width="2" height="1"/><rect x="617" y="168" width="1" height="1"/><rect x="618" y="167" width="1" height="1"/><rect x="619" y="166" width="2" height="1"/><rect x="620" y="165" width="1" height="1"/><rect x="621" y="164" width="1" height="1"/><rect x="622" y="163" width="2" height="1"/><rect x="623" y="162" width="1" height="1"/><rect x="624" y="161" width="1" height="1"/><rect x="625" y="160" width="2" height="1"/><rect x="626" y="159" width="1" height="1"/><rect x="627" y="158" width="1" height="1"/><rect x="628" y="157" width="2" height="1"/><rect x="629" y="156" width="1" height="1"/><rect x="630" y="155" width="1" height="1"/><rect x="631" y="154" width="2" height="1"/><rect x="632" y="153" width="1" height="1"/><rect x="633" y="152" width="1" height="1"/><rect x="634" y="151" width="2" height="1"/><rect x="635" y="150" width="1" height="1"/><rect x="636" y="149" width="1" height="1"/><rect x="637" y="148" width="2" height="1"/><rect x="638" y="147" width="1" height="1"/><rect x="639" y="146" width="1" height="1"/><rect x="640" y="145" width="2" height="1"/><rect x="641" y="144" width="1" height="1"/><rect x="642" y="143" width="1" height="1"/><rect x="643" y="142" width="2" height="1"/><rect x="644" y="141" width="1" height="1"/><rect x="645" y="140" width="1" height="1"/><rect x="646" y="139" width="2" height="1"/><rect x="647" y="138" width="1" height="1"/><rect x="648" y="137" width="1" height="1"/><rect x="780" y="137" width="2" height="1"/><rect x="782" y="138" width="1" height="1"/><rect x="783" y="139" width="1" height="1"/><rect x="783" y="140" width="2" height="1"/><rect x="785" y="141" width="1" height="1"/><rect x="786" y="142" width="1" height="1"/><rect x="786" y="143" width="2" height="1"/><rect x="788" y="144" width="1" height="1"/><rect x="789" y="145" width="1" height="1"/><rect x="789" y="146" width="2" height="1"/><rect x="791" y="147" width="1" height="1"/><rect x="792" y="148" width="1" height="1"/><rect x="792" y="149" width="2" height="1"/><rect x="794" y="150" width="1" height="1"/><rect x="795" y="151" width="1" height="1"/><rect x="795" y="152" width="2" height="1"/><rect x="797" y="153" width="1" height="1"/><rect x="798" y="154" width="1" height="1"/><rect x="798" y="155" width="2" height="1"/><rect x="800" y="156" width="1" height="1"/><rect x="801" y="157" width="1" height="1"/><rect x="801" y="158" width="2" height="1"/><rect x="803" y="159" width="1" height="1"/><rect x="804" y="160" width="1" height="1"/><rect x="804" y="161" width="2" height="1"/><rect x="806" y="162" width="1" height="1"/><rect x="807" y="163" width="1" height="1"/><rect x="807" y="164" width="2" height="1"/><rect x="809" y="165" width="1" height="1"/><rect x="810" y="166" width="1" height="1"/><rect x="810" y="167" width="2" height="1"/><rect x="812" y="168" width="1" height="1"/><rect x="813" y="169" width="1" height="1"/><rect x="813" y="170" width="2" height="1"/><rect x="815" y="171" width="1" height="1"/><rect x="816" y="172" width="1" height="1"/><rect x="816" y="173" width="2" height="1"/><rect x="818" y="174" width="1" height="1"/><rect x="819" y="175" width="1" height="1"/><rect x="819" y="176" width="2" height="1"/><rect x="821" y="177" width="1" height="1"/><rect x="822" y="178" width="1" height="1"/><rect x="822" y="179" width="2" height="1"/><rect x="824" y="180" width="1" height="1"/><rect x="825" y="181" width="1" height="1"/><rect x="825" y="182" width="2" height="1"/><rect x="827" y="183" width="1" height="1"/><rect x="828" y="184" width="1" height="1"/><rect x="828" y="185" width="2" height="1"/><rect x="830" y="186" width="1" height="1"/><rect x="831" y="187" width="1" height="1"/><rect x="831" y="188" width="2" height="1"/><rect x="833" y="189" width="1" height="1"/><rect x="834" y="190" width="1" height="1"/><rect x="834" y="191" width="2" height="1"/><rect x="836" y="192" width="1" height="1"/><rect x="837" y="193" width="1" height="1"/><rect x="837" y="194" width="2" height="1"/><rect x="839" y="195" width="1" height="1"/><rect x="840" y="196" width="1" height="1"/><rect x="840" y="197" width="2" height="1"/><rect x="842" y="198" width="1" height="1"/><rect x="843" y="199" width="1" height="1"/><rect x="843" y="200" width="2" height="1"/><rect x="845" y="201" width="1" height="1"/><rect x="846" y="202" width="1" height="1"/><rect x="846" y="203" width="2" height="1"/></g>
  <text x="526" y="92" fill="#ffff00" font-family="Liberation Sans" font-size="11" letter-spacing="-0.3">Height-Value</text>
  <text x="895" y="479" fill="#ffff00" font-family="Liberation Sans" font-size="11" letter-spacing="-0.3">Region-X</text>
  <!-- cyan axes -->
  <g fill="none" stroke="#00e0ff" stroke-width="1">
   <path d="M525.5 438 V458.5 H546"/>
   
   <path d="M540.5 454.5 L545.5 458.5 L540.5 462.5"/>
   
   
  </g>
  <g fill="#00e0ff"><rect x="521" y="415" width="1" height="2"/><rect x="522" y="417" width="1" height="1"/><rect x="523" y="418" width="1" height="1"/><rect x="524" y="419" width="1" height="5"/><rect x="527" y="415" width="1" height="2"/><rect x="526" y="417" width="1" height="1"/><rect x="525" y="418" width="1" height="1"/></g>
  <g fill="#00e0ff"><rect x="524" y="439" width="1" height="1"/><rect x="523" y="440" width="1" height="1"/><rect x="523" y="441" width="1" height="1"/><rect x="522" y="442" width="1" height="1"/><rect x="521" y="443" width="1" height="1"/><rect x="526" y="439" width="1" height="1"/><rect x="527" y="440" width="1" height="1"/><rect x="527" y="441" width="1" height="1"/><rect x="528" y="442" width="1" height="1"/><rect x="529" y="443" width="1" height="1"/><rect x="553" y="449" width="1" height="1"/><rect x="553" y="450" width="1" height="1"/><rect x="554" y="451" width="1" height="1"/><rect x="555" y="452" width="1" height="1"/><rect x="556" y="453" width="1" height="1"/><rect x="559" y="449" width="1" height="1"/><rect x="559" y="450" width="1" height="1"/><rect x="558" y="451" width="1" height="1"/><rect x="557" y="452" width="1" height="1"/><rect x="555" y="454" width="1" height="1"/><rect x="554" y="455" width="1" height="1"/><rect x="553" y="456" width="1" height="1"/><rect x="553" y="457" width="1" height="1"/><rect x="557" y="454" width="1" height="1"/><rect x="558" y="455" width="1" height="1"/><rect x="559" y="456" width="1" height="1"/><rect x="559" y="457" width="1" height="1"/></g>
  <!-- region rect -->
  <rect x="660.5" y="101.5" width="94" height="51" fill="none" stroke="#0000ff"/>
  <path d="M661 137.5 H751" stroke="#00ff00" stroke-width="3"/>
  <path d="M747.5 132.5 L752.5 137.5 L747.5 142.5" fill="none" stroke="#00ff00" stroke-width="2.6" stroke-linecap="square" shape-rendering="auto"/>
  <g fill="#a00000">
   <rect x="657" y="98" width="8" height="8"/><rect x="751" y="98" width="8" height="8"/>
   <rect x="657" y="149" width="8" height="8"/><rect x="751" y="149" width="8" height="8"/>
  </g>
  <g fill="#0a0a60">
   <rect x="659" y="100" width="4" height="4"/><rect x="753" y="100" width="4" height="4"/>
   <rect x="659" y="151" width="4" height="4"/><rect x="753" y="151" width="4" height="4"/>
  </g>
  <g fill="#ff00ff">
   <rect x="660" y="101" width="2" height="2"/><rect x="754" y="101" width="2" height="2"/>
   <rect x="660" y="152" width="2" height="2"/><rect x="754" y="152" width="2" height="2"/>
  </g>
  <g fill="#ff00ff">
   <rect x="752" y="123" width="4" height="1"/><rect x="751" y="124" width="1" height="1"/><rect x="756" y="124" width="1" height="1"/>
   <rect x="750" y="125" width="1" height="3"/><rect x="757" y="125" width="1" height="5"/>
   <rect x="751" y="128" width="1" height="2"/><rect x="753" y="127" width="1" height="4"/><rect x="754" y="130" width="4" height="1"/>
  </g>
 </svg>
 <!-- vertical scrollbar -->
 <div class="a" style="left:964px;top:79px;width:17px;height:407px;background:#ededed;border-left:1px solid #e3e3e3"></div>
 <svg class="a" style="left:969px;top:85px" width="8" height="5"><path d="M0 4.5 L3.5 0.5 L7.5 4.5 Z" fill="#3c3c3c"/></svg>
 <svg class="a" style="left:969px;top:475px" width="8" height="5"><path d="M0 0.5 L7.5 0.5 L3.5 4.5 Z" fill="#3c3c3c"/></svg>
 <div class="a" style="left:965px;top:222px;width:15px;height:121px;border:1px solid #979797;border-radius:2px;background:linear-gradient(90deg,#f3f3f3 0,#e8e8e8 50%,#d9d9d9 51%,#cecece 100%)"></div>
 <div class="a" style="left:968px;top:280px;width:8px;height:5px;border-top:1px solid #555;border-bottom:1px solid #555"></div>
 <div class="a" style="left:968px;top:282px;width:8px;height:1px;background:#555"></div>
 <!-- horizontal scrollbar -->
 <div class="a" style="left:501px;top:486px;width:463px;height:17px;background:#ededed;border-top:1px solid #e3e3e3"></div>
 <div class="a" style="left:964px;top:486px;width:17px;height:17px;background:#f0f0f0"></div>
 <svg class="a" style="left:506px;top:490px" width="5" height="8"><path d="M4.5 0 L0.5 3.5 L4.5 7.5 Z" fill="#3c3c3c"/></svg>
 <svg class="a" style="left:954px;top:490px" width="5" height="8"><path d="M0.5 0 L4.5 3.5 L0.5 7.5 Z" fill="#3c3c3c"/></svg>
 <div class="a" style="left:660px;top:487px;width:145px;height:15px;border:1px solid #979797;border-radius:2px;background:linear-gradient(180deg,#f3f3f3 0,#e8e8e8 50%,#d9d9d9 51%,#cecece 100%)"></div>
 <div class="a" style="left:729px;top:491px;width:5px;height:8px;border-left:1px solid #555;border-right:1px solid #555"></div>
 <div class="a" style="left:731px;top:491px;width:1px;height:8px;background:#555"></div>
</div>

<!-- status bar -->
<div class="a" style="left:8px;top:503px;width:973px;height:1px;background:#a0a0a0"></div>
<div class="a" style="left:8px;top:504px;width:973px;height:16px;background:#eeebea"></div>
<div class="a" style="left:25px;top:505px;width:1px;height:14px;background:#d6d3d2"></div>
<div class="a" style="left:26px;top:505px;width:1px;height:14px;background:#fff"></div>
<div class="a" style="left:12px;top:507px;width:12px;height:12px;border-radius:50%;background:#00f000;box-shadow:inset -1px -1px 1px #00a000"></div>
<div class="t" style="left:36px;top:506px">3.7431ms</div>
<div class="a" style="left:83px;top:505px;width:1px;height:14px;background:#d6d3d2"></div>
<div class="a" style="left:84px;top:505px;width:1px;height:14px;background:#fff"></div>
<div class="t" style="left:94px;top:506px">20.477ms</div>
<div class="a" style="left:141px;top:505px;width:1px;height:14px;background:#d6d3d2"></div>
<div class="a" style="left:142px;top:505px;width:1px;height:14px;background:#fff"></div>
<div class="a" style="left:237px;top:505px;width:1px;height:14px;background:#d6d3d2"></div><div class="a" style="left:238px;top:505px;width:1px;height:14px;background:#fff"></div>
<div class="a" style="left:964px;top:505px;width:1px;height:14px;background:#d6d3d2"></div>
<div class="a" style="left:965px;top:505px;width:1px;height:14px;background:#fff"></div>
<svg class="a" style="left:969px;top:508px" width="11" height="11"><g fill="#a0a0a0"><rect x="8" y="2" width="2" height="2"/><rect x="5" y="5" width="2" height="2"/><rect x="8" y="5" width="2" height="2"/><rect x="2" y="8" width="2" height="2"/><rect x="5" y="8" width="2" height="2"/><rect x="8" y="8" width="2" height="2"/></g></svg>

</body></html>
